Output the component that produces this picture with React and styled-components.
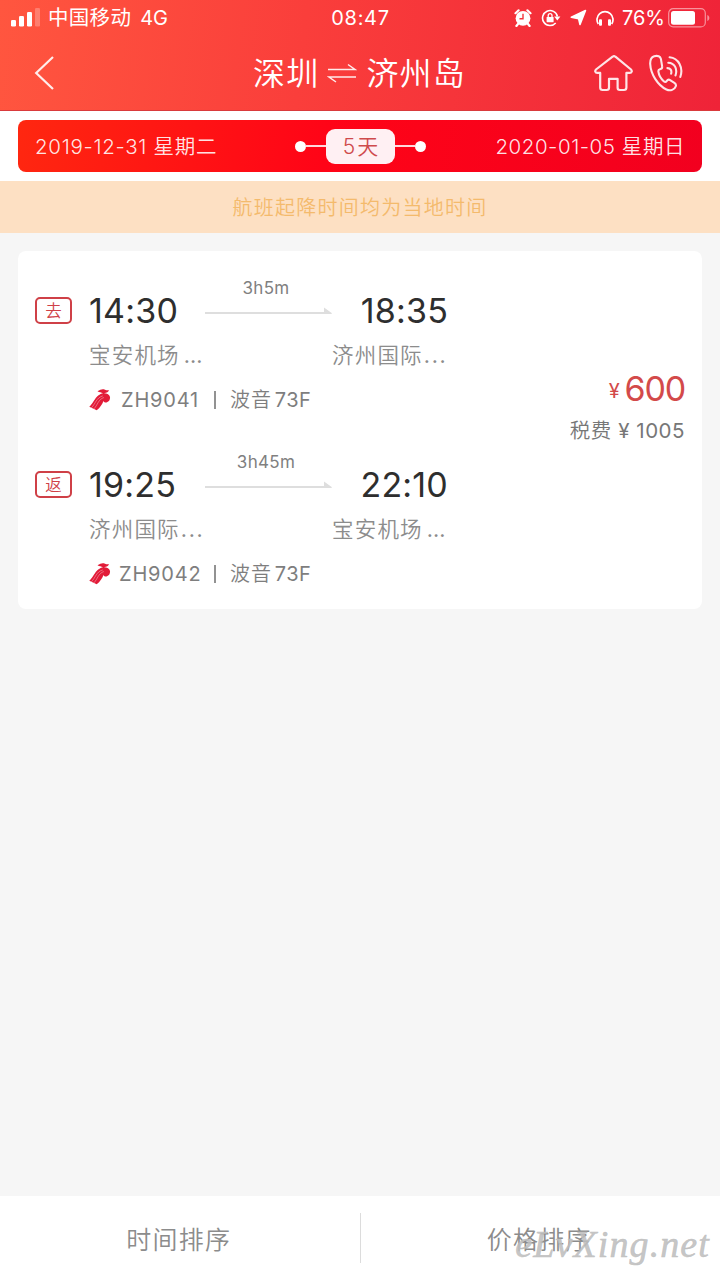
import React from 'react';
import styled, { createGlobalStyle } from 'styled-components';

const Global = createGlobalStyle`
  * { box-sizing: border-box; }
  body { margin: 0; background: #f6f6f6; font-family: Inter, "Noto Sans CJK SC", sans-serif; }
`;

const Screen = styled.div`
  position: relative;
  width: 720px;
  height: 1280px;
  display: flex;
  flex-direction: column;
  overflow: hidden;
  background: #f6f6f6;
  white-space: nowrap;
`;

const Header = styled.header`
  height: 111px;
  color: #fff;
  background: linear-gradient(97deg, #ff563f 0%, #fa3e3b 42%, #ef2338 100%);
  border-bottom: 1px solid #d93a3c;
`;

const StatusBar = styled.div`
  display: grid;
  grid-template-columns: 1fr auto 1fr;
  align-items: center;
  height: 35px;
  padding: 0 10px 0 11px;
  font-size: 20px;
  line-height: 24px;
`;

const StatusGroup = styled.div`
  display: flex;
  align-items: center;
  justify-content: ${(p) => (p.$end ? 'flex-end' : 'flex-start')};
`;

const Carrier = styled.span`
  margin-left: 7px;
  font-size: 20.5px;
  font-weight: 400;
  letter-spacing: 0.3px;
`;

const Network = styled.span`
  margin-left: 9px;
  font-size: 20px;
  letter-spacing: 0;
`;

const Clock = styled.span`
  letter-spacing: 0.7px;
  font-size: 20px;
  font-weight: 400;
`;

const Percent = styled.span`
  margin: 0 3px 0 8px;
  letter-spacing: 0;
`;

const NavBar = styled.nav`
  display: grid;
  grid-template-columns: 120px 1fr 126px;
  align-items: center;
  height: 75px;
`;

const BackButton = styled.div`
  display: flex;
  padding-left: 33px;
`;

const Route = styled.h1`
  display: flex;
  align-items: center;
  justify-content: center;
  margin: 0;
  padding: 2px 0 0 5px;
  font-size: 32px;
  font-weight: 350;
  line-height: 44px;
  letter-spacing: 1.2px;
`;

const SwapIcon = styled.svg`
  margin: -1px 9px 0 8px;
`;

const NavActions = styled.div`
  display: flex;
  align-items: center;
  gap: 15px;
`;

const DateSection = styled.section`
  height: 70px;
  padding: 9px 18px;
  background: #fff;
`;

const DateBar = styled.div`
  display: grid;
  grid-template-columns: 1fr auto 1fr;
  align-items: center;
  height: 52px;
  padding: 0 17px 0 17px;
  border-radius: 8px;
  background: linear-gradient(98deg, #ff2710 0%, #ff0417 45%, #f2001f 100%);
  color: rgba(255, 255, 255, 0.9);
`;

const DateText = styled.span`
  padding-top: 2px;
  font-size: 20.5px;
  font-weight: 350;
  line-height: 28px;
  letter-spacing: ${(p) => p.$spacing}px;
  text-align: ${(p) => (p.$end ? 'right' : 'left')};
`;

const Duration = styled.div`
  display: flex;
  align-items: center;
  padding-left: 1px;
`;

const Dot = styled.i`
  width: 11px;
  height: 11px;
  border-radius: 50%;
  background: #fff;
`;

const Connector = styled.i`
  width: 20px;
  height: 2px;
  background: rgba(255, 255, 255, 0.85);
`;

const Days = styled.span`
  width: 69px;
  height: 35px;
  border-radius: 9px;
  background: #fff0f3;
  color: #cf4a4c;
  font-size: 21px;
  font-weight: 350;
  line-height: 36px;
  letter-spacing: 2px;
  text-indent: 2px;
  text-align: center;
`;

const Notice = styled.div`
  height: 52px;
  padding-top: 1px;
  background: #fde0c3;
  color: #f4ba6c;
  font-size: 20px;
  font-weight: 350;
  line-height: 53px;
  letter-spacing: 1.25px;
  text-align: center;
`;

const Card = styled.main`
  display: flex;
  align-items: center;
  justify-content: space-between;
  height: 358px;
  margin: 18px 18px 0;
  padding: 0 17px;
  border-radius: 8px;
  background: #fff;
`;

const Flights = styled.div`
  display: flex;
  flex-direction: column;
  height: 348px;
`;

const Flight = styled.article`
  display: grid;
  grid-template-columns: 54px 116px 127px 1fr;
  grid-template-rows: 63px 44px 44px;
  height: 174px;
  width: 413px;
  padding-top: 13px;
`;

const Tag = styled.span`
  align-self: end;
  width: 37px;
  height: 27px;
  margin-bottom: 8px;
  border: 2px solid #cf4047;
  border-radius: 5px;
  color: #cf4047;
  font-size: 16.5px;
  font-weight: 350;
  line-height: 24px;
  text-align: center;
`;

const Time = styled.span`
  align-self: end;
  color: #2e2e2e;
  font-size: 34px;
  font-weight: 400;
  line-height: 42px;
  letter-spacing: ${(p) => p.$spacing}px;
  text-align: ${(p) => (p.$end ? 'right' : 'left')};
`;

const Leg = styled.div`
  display: flex;
  flex-direction: column;
  align-items: center;
  align-self: end;
  height: 54px;
  color: #808080;
  font-size: 17px;
  font-weight: 400;
  line-height: 20px;
  letter-spacing: 0.3px;
  padding-right: 5px;
  svg { margin: 9px -5px 0 0; }
`;

const Airport = styled.span`
  grid-column: ${(p) => (p.$end ? '3 / 5' : '2 / 3')};
  padding-left: ${(p) => (p.$end ? 127 : 0)}px;
  padding-top: 1px;
  color: #8c8c8c;
  font-size: 21.5px;
  font-weight: 350;
  line-height: 44px;
  letter-spacing: 1.2px;
`;

const Dots = styled.span`
  margin-left: ${(p) => (p.$gap ? 4 : 1)}px;
  font-weight: 400;
  letter-spacing: ${(p) => (p.$gap ? 0 : 1.7)}px;
`;

const Aircraft = styled.div`
  grid-column: 2 / 5;
  display: flex;
  align-items: center;
  padding-top: 3px;
  color: #7e7e7e;
  font-size: 20px;
  font-weight: 350;
  line-height: 44px;
`;

const FlightNumber = styled.span`
  width: 94px;
  padding-left: ${(p) => p.$pad}px;
  font-weight: 400;
  letter-spacing: 0.8px;
`;

const Bar = styled.i`
  width: 2px;
  height: 18px;
  margin: 0 14px 0 9px;
  background: #929292;
`;

const Model = styled.span`
  letter-spacing: 0.9px;
`;

const ModelCode = styled.span`
  margin-left: 3px;
  font-weight: 400;
  letter-spacing: 0.4px;
`;

const Fare = styled.div`
  display: flex;
  flex-direction: column;
  align-items: flex-end;
  padding-bottom: 48px;
  color: #777;
  font-size: 20.5px;
  font-weight: 350;
  line-height: 30px;
  letter-spacing: 0.7px;
`;

const TaxAmount = styled.span`
  font-weight: 400;
  letter-spacing: 0.5px;
`;

const Price = styled.div`
  color: #d34a4a;
  font-size: 34px;
  font-weight: 400;
  line-height: 44px;
  letter-spacing: -1.2px;
`;

const Currency = styled.span`
  position: relative;
  top: -3px;
  margin-right: 6px;
  font-size: 20px;
`;

const SortBar = styled.footer`
  display: grid;
  grid-template-columns: 1fr 1px 1fr;
  align-items: center;
  height: 84px;
  margin-top: auto;
  background: #fff;
`;

const SortOption = styled.span`
  color: #8c8c8c;
  font-size: 25px;
  font-weight: 350;
  line-height: 60px;
  letter-spacing: 1.2px;
  text-align: center;
  padding: 3px 2px 0 0;
`;

const Divider = styled.i`
  height: 50px;
  background: #dcdcdc;
`;

const Watermark = styled.span`
  position: absolute;
  right: 10px;
  bottom: 13px;
  color: rgba(190, 190, 190, 0.9);
  font: italic 400 38px/46px "Liberation Serif", serif;
  letter-spacing: 1.1px;
  -webkit-text-stroke: 0.6px rgba(190, 190, 190, 0.9);
`;

const Signal = () => (
  <svg width="30" height="19" viewBox="0 0 30 19" fill="#fff">
    <rect x="0" y="12" width="5" height="6.5" rx="1.3" />
    <rect x="8" y="8" width="5" height="10.5" rx="1.3" />
    <rect x="16" y="4" width="5" height="14.5" rx="1.3" />
    <rect x="24" y="0" width="5" height="18.5" rx="1.3" opacity=".25" />
  </svg>
);

const Alarm = () => (
  <svg width="18" height="18" viewBox="0 0 18 18">
    <circle cx="9" cy="9.3" r="7.4" fill="#fff" />
    <path d="M1.5 4.2 4.6 1.3M16.5 4.2 13.4 1.3M4 15l-1.6 2M14 15l1.6 2" stroke="#fff" strokeWidth="2.2" strokeLinecap="round" />
    <path d="M9 4.8v5H5.5" stroke="#f5333b" strokeWidth="1.4" fill="none" />
  </svg>
);

const RotationLock = () => (
  <svg width="20" height="18" viewBox="0 0 20 18" fill="none" stroke="#fff">
    <path d="M14.7 14A7.5 7.5 0 1 1 16.4 7.5" strokeWidth="1.6" />
    <path d="M13.2 7.6h6.2l-3.1 4z" fill="#fff" stroke="none" />
    <rect x="5.6" y="8" width="7" height="5.3" rx=".6" fill="#fff" stroke="none" />
    <path d="M7.2 8V6.5a1.9 1.9 0 0 1 3.8 0V8" strokeWidth="1.3" />
  </svg>
);

const LocationArrow = () => (
  <svg width="17" height="17" viewBox="0 0 17 17" fill="#fff">
    <path d="M15.5 1.5 10 15.5 8.6 9.6 1.3 8.200z" stroke="#fff" strokeWidth="1.6" strokeLinejoin="round" />
  </svg>
);

const Headphones = () => (
  <svg width="18" height="18" viewBox="0 0 18 18" fill="none" stroke="#fff">
    <path d="M2.3 15A8 8 0 1 1 15.7 15" strokeWidth="1.7" />
    <rect x="3" y="10.3" width="3" height="6.4" rx="1" fill="#fff" stroke="none" />
    <rect x="12" y="10.3" width="3" height="6.4" rx="1" fill="#fff" stroke="none" />
  </svg>
);

const Battery = () => (
  <svg width="42" height="20" viewBox="0 0 42 20" fill="none">
    <rect x=".7" y=".7" width="36.6" height="18.2" rx="4.5" stroke="#fff" strokeOpacity=".5" strokeWidth="1.2" />
    <rect x="3" y="3" width="24" height="13.7" rx="2.5" fill="#fff" />
    <path d="M39.3 7v6c2.7-.8 2.7-5.2 0-6z" fill="#fff" fillOpacity=".5" />
  </svg>
);

const StatusIcons = styled.div`
  display: flex;
  align-items: center;
  gap: 9px;
`;

const HomeIcon = () => (
  <svg width="40" height="38" viewBox="0 0 40 38" fill="none" stroke="#fff" strokeOpacity=".88" strokeWidth="2.2" strokeLinejoin="round">
    <path d="M18.6 2.7 2 15.5c-1.4 1.5-.8 3.4 1.2 3.4h3V33.5c0 1.7.8 2.5 2.4 2.5h4.2c1.4 0 2.2-.8 2.2-2.2v-9h8.600v9c0 1.400.8 2.200 2.200 2.200h4.200c1.600 0 2.400-.8 2.400-2.500V18.900h3.400c2 0 2.600-1.900 1.200-3.400L21.400 2.700c-.9-.8-1.900-.8-2.800 0z" />
  </svg>
);

const PhoneIcon = () => (
  <svg width="34" height="38" viewBox="0 0 34 38" fill="none" stroke="#fff" strokeOpacity=".88" strokeWidth="2.1" strokeLinecap="round" strokeLinejoin="round">
    <path d="M5.2 2.3C2.3 3.3 1 5.8 1.2 10c.5 10 7.4 21.2 16.2 25.5 4 1.9 8.3.2 9.4-3.3.5-1.4-.2-2.5-1.4-3.4l-4.3-2.7c-1.3-.8-2.5-.4-3.5 1-.8 1.1-1.7 1.1-2.9.1-2.9-2.5-4.8-6-5.3-9.5-.2-1.4.2-2.1 1.5-2.4 1.8-.4 2.5-1.5 2.2-3.1L11.9 4.9C11.4 2.700 8.700 1.100 5.200 2.300z" />
    <path d="M18.4 14.1c2.9 0 4.7 2.4 3.7 5.6M19.3 8.7c6 .3 9.5 5.7 7.2 12.7M20.6 3.3c9 .8 14 10.4 10.7 19.7" />
  </svg>
);

const Arrow = () => (
  <svg width="127" height="8" viewBox="0 0 127 8" fill="#dedede">
    <path d="M0 5h119V.5l7.7 5.500v1H0z" />
  </svg>
);

const AirlineLogo = () => (
  <svg width="22" height="22" viewBox="0 0 22 22" fill="none">
    <path d="M8.5 2.300C11.500.6 13.500-.3 16 .8c1.500.6 2.800.7 4 .3-.4 1.900-2.200 2.900-5 3.100 3.100.2 5.700 1.400 6 3.900.3 2.800-1.100 4.500-3 5.200-1.500.5-2.900-.1-3.500-1.400-1.300 3.300-3.300 6.500-6.800 9.300L.3 17.700C4.600 14 5.300 9.500 9.200 6.500c1.700-1.400 3.200-2 4.900-2.300-1.900-.8-3.700-.8-5.600-1.900z" fill="#e21b38" />
    <path d="M2.300 18.900C6.700 14.600 7 8.900 13.800 6.900M4.600 20.200c4.400-4.500 4.500-9.800 10.300-11.700" stroke="#fff" strokeOpacity=".5" strokeWidth=".7" />
  </svg>
);

const flights = [
  { tag: '去', start: '14:30', end: '18:35', leg: '3h5m', from: '宝安机场', to: '济州国际', number: 'ZH9041', pad: 10 },
  { tag: '返', start: '19:25', end: '22:10', leg: '3h45m', from: '济州国际', to: '宝安机场', number: 'ZH9042', pad: 8 },
];

const AirportName = ({ name, end }) => (
  <Airport $end={end}>{name}<Dots $gap={name === '宝安机场'}>...</Dots></Airport>
);

export default function App() {
  return (
    <Screen>
      <Global />
      <Header>
        <StatusBar>
          <StatusGroup>
            <Signal />
            <Carrier>中国移动</Carrier>
            <Network>4G</Network>
          </StatusGroup>
          <Clock>08:47</Clock>
          <StatusGroup $end>
            <StatusIcons><Alarm /><RotationLock /><LocationArrow /><Headphones /></StatusIcons>
            <Percent>76%</Percent>
            <Battery />
          </StatusGroup>
        </StatusBar>
        <NavBar>
          <BackButton>
            <svg width="22" height="34" viewBox="0 0 22 34" fill="none" stroke="#fff" strokeOpacity=".9" strokeWidth="2.2">
              <path d="M20 1 3.2 17 20 33" />
            </svg>
          </BackButton>
          <Route>
            深圳
            <SwapIcon width="30" height="20" viewBox="0 0 30 20" fill="none" stroke="#fff" strokeOpacity=".9" strokeWidth="1.5">
              <path d="M1 6.5h27L21 1.500M29 14H2l7 5" />
            </SwapIcon>
            济州岛
          </Route>
          <NavActions><HomeIcon /><PhoneIcon /></NavActions>
        </NavBar>
      </Header>
      <DateSection>
        <DateBar>
          <DateText $spacing={0.7}>2019-12-31 星期二</DateText>
          <Duration><Dot /><Connector /><Days>5天</Days><Connector /><Dot /></Duration>
          <DateText $spacing={0.55} $end>2020-01-05 星期日</DateText>
        </DateBar>
      </DateSection>
      <Notice>航班起降时间均为当地时间</Notice>
      <Card>
        <Flights>
          {flights.map((f) => (
            <Flight key={f.number}>
              <Tag>{f.tag}</Tag>
              <Time $spacing={0.2}>{f.start}</Time>
              <Leg>{f.leg}<Arrow /></Leg>
              <Time $spacing={0.2} $end>{f.end}</Time>
              <AirportName name={f.from} />
              <AirportName name={f.to} end />
              <Aircraft>
                <AirlineLogo />
                <FlightNumber $pad={f.pad}>{f.number}</FlightNumber>
                <Bar />
                <Model>波音<ModelCode>73F</ModelCode></Model>
              </Aircraft>
            </Flight>
          ))}
        </Flights>
        <Fare>
          <Price><Currency>¥</Currency>600</Price>
          <span>税费<TaxAmount> ¥ 1005</TaxAmount></span>
        </Fare>
      </Card>
      <SortBar>
        <SortOption>时间排序</SortOption>
        <Divider />
        <SortOption>价格排序</SortOption>
      </SortBar>
      <Watermark>eLvXing.net</Watermark>
    </Screen>
  );
}
